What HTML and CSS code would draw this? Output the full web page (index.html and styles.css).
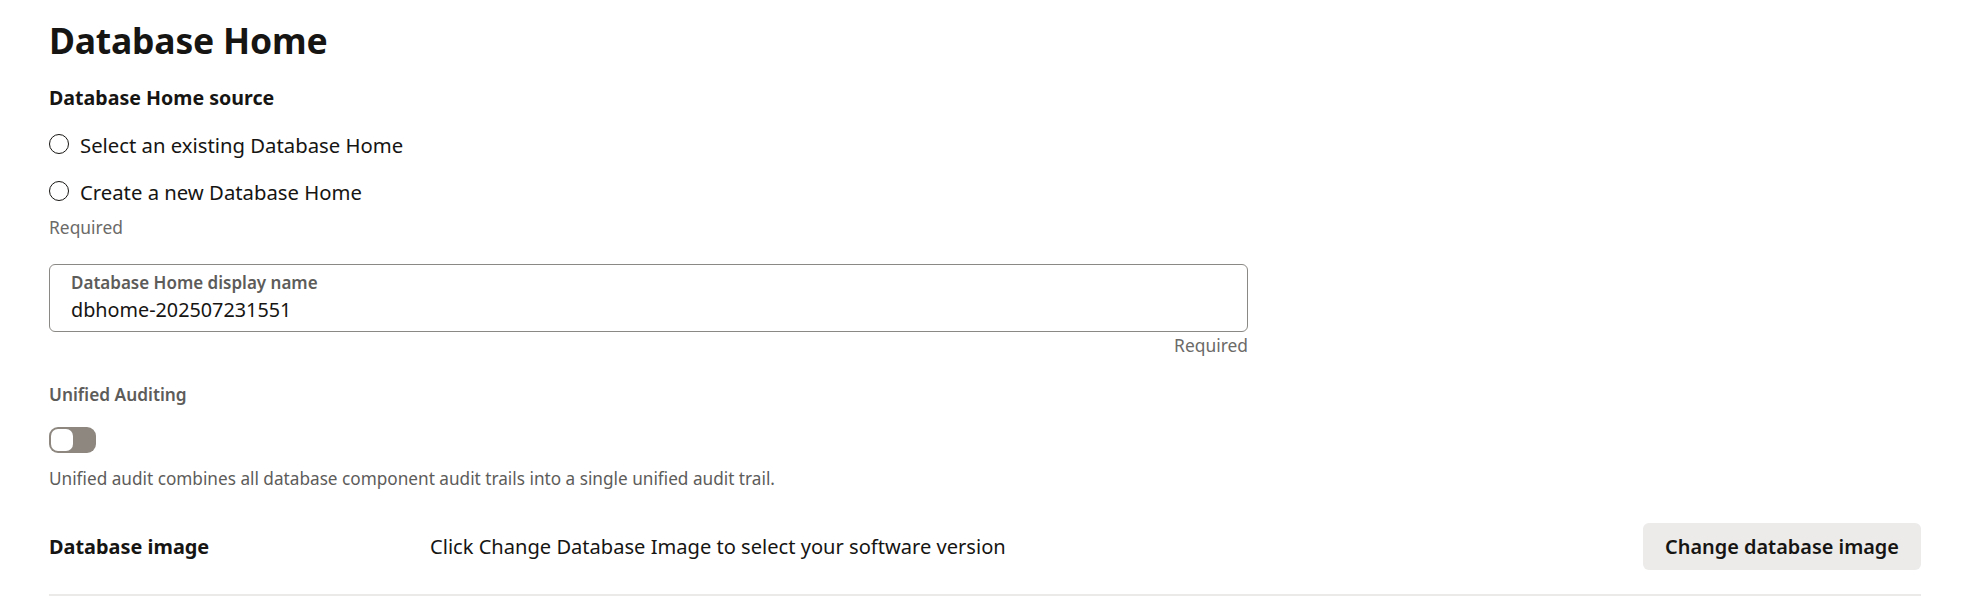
FILE: index.html
```html
<!DOCTYPE html>
<html lang="en">
<head>
<meta charset="utf-8">
<title>Database Home</title>
<link rel="stylesheet" href="styles.css">
</head>
<body>
<main class="page">
  <h1 class="title">Database Home</h1>

  <fieldset class="radio-group">
    <legend class="group-label">Database Home source</legend>
    <label class="radio-row"><span class="radio"></span><span class="radio-text">Select an existing Database Home</span></label>
    <label class="radio-row"><span class="radio"></span><span class="radio-text">Create a new Database Home</span></label>
    <div class="hint">Required</div>
  </fieldset>

  <div class="field">
    <div class="input-box">
      <div class="input-label">Database Home display name</div>
      <div class="input-value">dbhome-202507231551</div>
    </div>
    <div class="hint hint-right">Required</div>
  </div>

  <div class="switch-field">
    <div class="switch-label">Unified Auditing</div>
    <div class="switch"><span class="knob"></span></div>
    <div class="help">Unified audit combines all database component audit trails into a single unified audit trail.</div>
  </div>

  <div class="image-row">
    <div class="image-label">Database image</div>
    <div class="image-text">Click Change Database Image to select your software version</div>
    <button class="btn" type="button">Change database image</button>
  </div>
</main>
</body>
</html>
```

FILE: styles.css
```css
* { box-sizing: border-box; }
html, body { margin: 0; padding: 0; background: #ffffff; }
body {
  font-family: "Noto Sans", "Open Sans", "Liberation Sans", sans-serif;
  color: #161513;
}
.page {
  padding: 18px 65px 0 49px;
}
.title {
  margin: 0;
  font-size: 35.5px;
  line-height: 44px;
  font-weight: 700;
  letter-spacing: -0.2px;
}
.radio-group {
  border: 0;
  margin: 22px 0 0;
  padding: 0;
  min-width: 0;
}
.group-label {
  padding: 0;
  font-size: 19.6px;
  line-height: 28px;
  font-weight: 700;
  margin-bottom: 19px;
}
.radio-row {
  display: flex;
  align-items: center;
  gap: 11px;
  height: 28px;
  margin-bottom: 19px;
  font-size: 20.3px;
  line-height: 28px;
}
.radio-row + .radio-row { margin-bottom: 9px; }
.radio {
  width: 20px;
  height: 20px;
  border: 1.7px solid #161513;
  border-radius: 50%;
  flex: none;
  margin-top: -2px;
}
.hint {
  font-size: 17.4px;
  line-height: 24px;
  color: #6b6a68;
}
.field {
  margin-top: 25px;
  width: 1199px;
}
.input-box {
  height: 68px;
  border: 1px solid #8b8985;
  border-radius: 6px;
  padding: 7px 21px 0;
}
.input-label {
  font-size: 17px;
  line-height: 22px;
  font-weight: 600;
  color: #5d5c5a;
}
.input-value {
  margin-top: 3px;
  font-size: 19.8px;
  line-height: 26px;
}
.hint-right {
  text-align: right;
  margin-top: 1px;
}
.switch-field {
  margin-top: 26px;
}
.switch-label {
  font-size: 17.3px;
  line-height: 24px;
  font-weight: 600;
  color: #5d5c5a;
}
.switch {
  margin-top: 20px;
  width: 47px;
  height: 26px;
  border-radius: 9px;
  background: #8d8780;
  padding: 2px;
}
.knob {
  display: block;
  width: 22px;
  height: 22px;
  border-radius: 7px;
  background: #ffffff;
}
.help {
  margin-top: 14px;
  font-size: 17.2px;
  line-height: 24px;
  color: #5d5c5a;
}
.image-row {
  margin-top: 8px;
  display: flex;
  align-items: center;
  padding: 24px 0;
  border-bottom: 2px solid #ebeae9;
  width: 1872px;
}
.image-label {
  width: 381px;
  flex: none;
  font-size: 19.9px;
  line-height: 28px;
  font-weight: 700;
}
.image-text {
  flex: 1;
  font-size: 20.1px;
  line-height: 28px;
}
.btn {
  flex: none;
  width: 278px;
  height: 47px;
  border: 0;
  border-radius: 6px;
  background: #ecebea;
  font-family: inherit;
  font-size: 19.9px;
  font-weight: 600;
  color: #161513;
  padding: 0;
}
```
